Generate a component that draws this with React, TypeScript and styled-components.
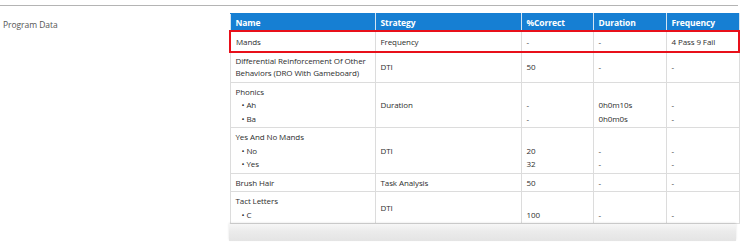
import { createGlobalStyle, styled } from "styled-components";

type Row = {
  name: string[];
  items?: string[];
  strategy: string;
  correct: string[];
  duration: string[];
  frequency: string[];
  highlight?: boolean;
};

const rows: Row[] = [
  {
    name: ["Mands"],
    strategy: "Frequency",
    correct: ["-"],
    duration: ["-"],
    frequency: ["4 Pass 9 Fail"],
    highlight: true,
  },
  {
    name: ["Differential Reinforcement Of Other", "Behaviors (DRO With Gameboard)"],
    strategy: "DTI",
    correct: ["50"],
    duration: ["-"],
    frequency: ["-"],
  },
  {
    name: ["Phonics"],
    items: ["Ah", "Ba"],
    strategy: "Duration",
    correct: ["", "-", "-"],
    duration: ["", "0h0m10s", "0h0m0s"],
    frequency: ["", "-", "-"],
  },
  {
    name: ["Yes And No Mands"],
    items: ["No", "Yes"],
    strategy: "DTI",
    correct: ["", "20", "32"],
    duration: ["", "-", "-"],
    frequency: ["", "-", "-"],
  },
  {
    name: ["Brush Hair"],
    strategy: "Task Analysis",
    correct: ["50"],
    duration: ["-"],
    frequency: ["-"],
  },
  {
    name: ["Tact Letters"],
    items: ["C"],
    strategy: "DTI",
    correct: ["", "100"],
    duration: ["", "-"],
    frequency: ["", "-"],
  },
];

const GlobalStyle = createGlobalStyle`
  body {
    margin: 0;
    background: #fff;
    font-family: "Open Sans", "Noto Sans", sans-serif;
  }
`;

function Lines({ values }: { values: string[] }) {
  return (
    <>
      {values.map((v, i) => (
        <Line key={i}>{v || "\u00a0"}</Line>
      ))}
    </>
  );
}

export default function App() {
  return (
    <>
      <GlobalStyle />
      <Page>
        <Section>
          <Label>Program Data</Label>
          <TableWrap>
            <Table>
              <colgroup>
                <col style={{ width: 145 }} />
                <col style={{ width: 146 }} />
                <col style={{ width: 72 }} />
                <col style={{ width: 73 }} />
                <col style={{ width: 73 }} />
              </colgroup>
              <thead>
                <tr>
                  <HeadCell>Name</HeadCell>
                  <HeadCell>Strategy</HeadCell>
                  <HeadCell>%Correct</HeadCell>
                  <HeadCell>Duration</HeadCell>
                  <HeadCell>Frequency</HeadCell>
                </tr>
              </thead>
              <tbody>
                {rows.map((r) => (
                  <tr key={r.name[0]}>
                    <Cell $highlight={r.highlight} $first>
                      {r.name.map((n) => (
                        <NameLine key={n} $wrapped={r.name.length > 1}>
                          {n}
                        </NameLine>
                      ))}
                      {r.items?.map((it) => (
                        <Bullet key={it}>• {it}</Bullet>
                      ))}
                    </Cell>
                    <Cell $highlight={r.highlight}>{r.strategy}</Cell>
                    <Cell $highlight={r.highlight}>
                      <Lines values={r.correct} />
                    </Cell>
                    <Cell $highlight={r.highlight}>
                      <Lines values={r.duration} />
                    </Cell>
                    <Cell $highlight={r.highlight} $last>
                      <Lines values={r.frequency} />
                    </Cell>
                  </tr>
                ))}
              </tbody>
            </Table>
            <ScrollBar />
          </TableWrap>
        </Section>
      </Page>
    </>
  );
}

// Styled components
const Page = styled.div`
  width: 742px;
  height: 242px;
  overflow: hidden;
  padding-top: 5px;
  box-sizing: border-box;
`;

const Section = styled.div`
  display: flex;
  align-items: flex-start;
  width: 738px;
  border-top: 1px solid #b4b4b4;
  padding-top: 7px;
`;

const Label = styled.div`
  width: 225px;
  padding: 6px 0 0 3px;
  font-size: 8.5px;
  letter-spacing: -0.05px;
  color: #555;
`;

const TableWrap = styled.div`
  display: flex;
  flex-direction: column;
  width: 509px;
  margin-left: 1px;
`;

const Table = styled.table`
  width: 509px;
  border-collapse: collapse;
  table-layout: fixed;
  font-size: 8px;
  letter-spacing: -0.1px;
  color: #2e2e2e;
`;

const HeadCell = styled.th`
  background: #167fd3;
  color: #fff;
  font-weight: 700;
  font-size: 8.5px;
  text-align: left;
  padding: 2px 5px 1px;
  line-height: 13px;
  border: 1px solid #d4e4f2;
  border-top-color: #167fd3;
`;

const Cell = styled.td<{ $highlight?: boolean; $first?: boolean; $last?: boolean }>`
  padding: 2px 5px 2px;
  line-height: 13.5px;
  vertical-align: middle;
  white-space: nowrap;
  border: 1px solid #dcdcdc;
  ${(p) =>
    p.$highlight &&
    `
    border-top: 2px solid #e8101a;
    border-bottom: 2px solid #e8101a;
    padding-top: 3px;
  `}
  ${(p) => p.$highlight && p.$first && `border-left: 2px solid #e8101a;`}
  ${(p) => p.$highlight && p.$last && `border-right: 2px solid #e8101a;`}
`;

const NameLine = styled.div<{ $wrapped?: boolean }>`
  line-height: ${(p) => (p.$wrapped ? "12.5px" : "13.5px")};
`;

const Line = styled.div``;

const Bullet = styled.div`
  padding-left: 6px;
`;

const ScrollBar = styled.div`
  height: 17px;
  margin-right: 2px;
  background: linear-gradient(to bottom, #f6f6f6 0%, #ebebeb 45%, #e4e4e4 100%);
  box-shadow: 0 -1px 2px rgba(0, 0, 0, 0.12);
`;
